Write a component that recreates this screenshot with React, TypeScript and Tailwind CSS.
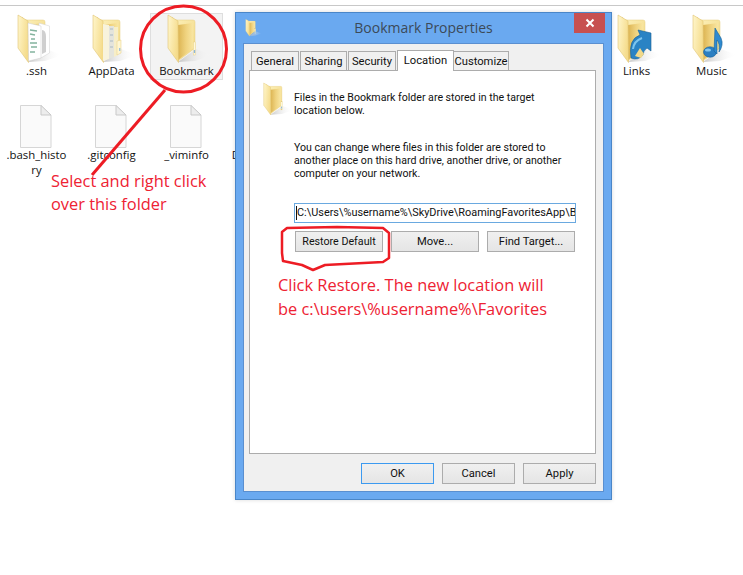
import React from "react";

const DIALOG = "font-['Roboto',sans-serif] text-[11.2px]";

function FolderBase({ children, w = 48, h = 49 }: { children?: React.ReactNode; w?: number; h?: number }) {
  return (
    <svg width={w} height={h} viewBox="-2 0 48 49" className="overflow-visible">
      <defs>
        <linearGradient id="fb" x1="0" y1="0" x2="1" y2="1">
          <stop offset="0" stopColor="#fdf2bd" />
          <stop offset="1" stopColor="#f1d680" />
        </linearGradient>
        <linearGradient id="ff" x1="0" y1="0" x2="1" y2="0.4">
          <stop offset="0" stopColor="#fff6cc" />
          <stop offset="1" stopColor="#f5dc8c" />
        </linearGradient>
        <linearGradient id="fs" x1="0" y1="0" x2="1" y2="0">
          <stop offset="0" stopColor="#dcb452" />
          <stop offset="0.5" stopColor="#efd27e" />
          <stop offset="1" stopColor="#f9e7a4" />
        </linearGradient>
        <linearGradient id="sh" x1="0" y1="0" x2="1" y2="0">
          <stop offset="0" stopColor="#b5b5b5" stopOpacity="0.75" />
          <stop offset="1" stopColor="#ffffff" stopOpacity="0" />
        </linearGradient>
      </defs>
      <path d="M13 47 L31 34 L47 40 L30 46Z" fill="url(#sh)" />
      <path d="M7 2 L10 5 L28 5 Q30 5 30 7 L30 33 L13 46Z" fill="url(#fb)" stroke="#e6cd82" strokeWidth="0.5" />
      <path d="M13 10 L28 8 L28.5 33 L13 45Z" fill="url(#fs)" />
      <path d="M3 0 L13 6 L13.5 47.5 L3 33Z" fill="url(#ff)" stroke="#e0c574" strokeWidth="0.6" />
      {children}
    </svg>
  );
}

function FolderSsh() {
  return (
    <FolderBase>
      <path d="M34.5 11 L24 8 L24 44 L34.5 38Z" fill="#fff" stroke="#d0d0d0" strokeWidth="0.5" />
      <path d="M13 8 L26 11 L26 43 L13.5 46Z" fill="#fff" stroke="#cfcfcf" strokeWidth="0.5" />
      <path d="M27 15 Q31 15 31 22 L31 37 L27 39Z" fill="#cfcfcf" />
      <path d="M15 15 L22 16 M15 19 L20 20 M16 24 L20 24 M15 28 L22 28 M16 32 L22 32 M15 37 L20 37" stroke="#84b49e" strokeWidth="1.5" />
    </FolderBase>
  );
}
function FolderApp() {
  return (
    <FolderBase>
      <path d="M13 9 L19 10 L19 44 L13 46Z" fill="#f8f3dc" />
      <path d="M19 11 L24 11 L24 42 L19 44Z" fill="#e4e4dc" />
      <path d="M20 14 L23 14 M20 20 L23 20 M20 26 L23 26 M20 32 L23 32" stroke="#bcc6cc" strokeWidth="1.5" />
      <path d="M24 12 L28 12 L28 40 L24 42Z" fill="#f7eec8" />
      <path d="M27 26 L31 25 L31 38 L27 40Z" fill="#fff6d2" stroke="#e6cd82" strokeWidth="0.5" />
      <rect x="29" y="33" width="1.4" height="3" fill="#9fc2dc" />
    </FolderBase>
  );
}
function FolderPlain({ w, h }: { w?: number; h?: number }) {
  return (
    <FolderBase w={w} h={h}>
      <rect x="28.5" y="27" width="2" height="13" fill="#fff8d8" stroke="#e6cd82" strokeWidth="0.4" />
      <rect x="28.8" y="35" width="1.4" height="3" fill="#8fb7d6" />
    </FolderBase>
  );
}
function FolderLinks() {
  return (
    <FolderBase>
      <path d="M16 43 Q13 24 25 20 L23 15 L36 18 L36 36 L32 33 Q28 36 28 40 Q23 46 16 43Z" fill="#2a83c4" stroke="#176095" strokeWidth="0.6" />
      <path d="M18 34 Q19 26 27 23" stroke="#7cc4ee" strokeWidth="2" fill="none" />
      <path d="M20 41 L25 33 L29 39 L26 43Z" fill="#f2d98a" />
    </FolderBase>
  );
}
function FolderMusic() {
  return (
    <FolderBase>
      <ellipse cx="20" cy="37" rx="6.5" ry="5.2" fill="#2b7fc2" stroke="#185f96" strokeWidth="0.6" />
      <path d="M24 36 L25 13 Q28 18 31 23 Q34 30 29 37 Q30 28 27 25 L27 39Z" fill="#2f8ad0" stroke="#185f96" strokeWidth="0.6" />
      <ellipse cx="18" cy="35" rx="3" ry="1.6" fill="#83c7f0" />
    </FolderBase>
  );
}
function FileIcon() {
  return (
    <svg width="33" height="43" viewBox="0 0 33 43" className="mt-[6px] mr-[2px]">
      <path d="M1.5 0.5 L22 0.5 L32 10 L32 42.5 L1.5 42.5Z" fill="#fafafa" stroke="#d6d6d6" />
      <path d="M22 0.5 L22 10 L32 10Z" fill="#ededed" stroke="#c9c9c9" />
    </svg>
  );
}

function DeskItem({ icon, label, selected }: { icon?: React.ReactNode; label?: React.ReactNode; selected?: boolean }) {
  return (
    <div
      className={`flex flex-col items-center pt-[1px] h-[67px] mr-[2px] border ${
        selected ? "bg-[#f3f3f3] border-[#dedede]" : "border-transparent"
      }`}
    >
      <div className="h-[48px] flex items-center justify-center">{icon}</div>
      <div className="text-[11.4px] leading-[15px] text-[#111] text-center whitespace-nowrap">{label}</div>
    </div>
  );
}

function Win8Button({ label, focus, wide, size }: { label: string; focus?: boolean; wide?: boolean; size?: string }) {
  return (
    <div
      className={`flex items-center justify-center whitespace-nowrap pt-[1px] text-[#111] border bg-gradient-to-b from-[#f0f0f0] to-[#e5e5e5] ${
        focus ? "border-[#3c9af0]" : "border-[#acacac]"
      } ${wide ? "w-[88px] h-[21px]" : "w-[73px] h-[21px]"} ${size ?? ""}`}
    >
      {label}
    </div>
  );
}

function Tab({ label, active, w }: { label: string; active?: boolean; w: string }) {
  return active ? (
    <div className={`${w} h-[21px] bg-white border border-b-0 border-[#acacac] text-[#111] flex items-center justify-center relative z-10 mb-[-1px]`}>
      {label}
    </div>
  ) : (
    <div className={`${w} h-[19px] bg-[#f0f0f0] border border-b-0 border-[#acacac] text-[#111] flex items-center justify-center pt-[2px]`}>
      {label}
    </div>
  );
}

export default function App() {
  return (
    <div className="relative w-[743px] h-[575px] bg-white overflow-hidden font-['Open_Sans',sans-serif]">
      <div className="h-[6px] border-b border-[#c8c8c8]" />
      {/* Explorer icon grid */}
      <div className="grid grid-cols-[repeat(10,75px)] pt-[7px] gap-y-[17px]">
        <DeskItem icon={<FolderSsh />} label=".ssh" />
        <DeskItem icon={<FolderApp />} label="AppData" />
        <DeskItem icon={<FolderPlain />} label="Bookmark" selected />
        <div /><div /><div /><div /><div />
        <DeskItem icon={<FolderLinks />} label="Links" />
        <DeskItem icon={<FolderMusic />} label="Music" />
        <DeskItem icon={<FileIcon />} label={<>.bash_histo<br />ry</>} />
        <DeskItem icon={<FileIcon />} label=".gitconfig" />
        <DeskItem icon={<FileIcon />} label="_viminfo" />
        <DeskItem label="Desktop.ini" />
      </div>

      {/* Dialog window */}
      <div className={`absolute left-[235px] top-[12px] w-[377px] h-[488px] bg-[#6aa9f0] border border-[#4a86c8] flex flex-col px-[7px] pb-[7px] shadow-[0_0_4px_rgba(0,0,0,0.15)] ${DIALOG}`}>
        <div className="relative h-[30px] shrink-0 flex items-center justify-center pb-[2px] text-[14px] text-[#3c4a58] font-['Open_Sans',sans-serif]">
          <span className="absolute left-[1px] top-[6px]"><FolderPlain w={17} h={18} /></span>
          Bookmark Properties
          <span className="absolute right-[-1px] top-0 w-[31px] h-[20px] bg-[#c75050] flex items-center justify-center">
            <svg width="10" height="10" viewBox="0 0 10 10">
              <path d="M1.5 1.5 L8.5 8.5 M8.5 1.5 L1.5 8.5" stroke="#fff" strokeWidth="2" />
            </svg>
          </span>
        </div>
        <div className="flex-1 bg-[#f0f0f0] border border-[#5a8fd0] flex flex-col pl-[5px] pr-[7px] pt-[5px]">
          <div className="flex items-end pl-[2px] h-[21px] shrink-0 gap-[1px]">
            <Tab label="General" w="w-[48px]" />
            <Tab label="Sharing" w="w-[47px]" />
            <Tab label="Security" w="w-[48px]" />
            <Tab label="Location" active w="w-[57px]" />
            <Tab label="Customize" w="w-[56px] ml-[-2px]" />
          </div>
          <div className="h-[384px] bg-white border border-[#acacac] pl-[13px] pt-[12px] shrink-0">
            <div className="flex">
              <div className="w-[31px] shrink-0 ml-[-3px] mr-[3px]"><FolderPlain w={33} h={33} /></div>
              <p className="leading-[13px] text-[10.6px] text-[#111] pt-[8px] whitespace-nowrap">
                Files in the Bookmark folder are stored in the target<br />location below.
              </p>
            </div>
            <p className="leading-[13px] text-[10.6px] text-[#111] ml-[31px] mt-[24px] whitespace-nowrap">
              You can change where files in this folder are stored to<br />another place on this hard drive, another drive, or another<br />computer on your network.
            </p>
            <div className="ml-[31px] mt-[23px] w-[282px] h-[20px] border border-[#6aa9e0] bg-white leading-[18px] text-[10.9px] text-[#111] pl-[1px] flex items-center overflow-hidden whitespace-nowrap">
              <span className="w-[1px] h-[14px] bg-[#111] shrink-0" />
              C:\Users\%username%\SkyDrive\RoamingFavoritesApp\B
            </div>
            <div className="ml-[32px] mt-[8px] w-[280px] flex justify-between">
              <Win8Button wide label="Restore Default" size="text-[10.7px]" />
              <Win8Button wide label="Move..." />
              <Win8Button wide label="Find Target..." />
            </div>
          </div>
          <div className="flex justify-end gap-[8px] mt-[9px]">
            <Win8Button focus label="OK" />
            <Win8Button label="Cancel" />
            <Win8Button label="Apply" />
          </div>
        </div>
      </div>

      {/* Hand-drawn annotations */}
      <svg className="absolute left-0 top-0 pointer-events-none" width="743" height="575" viewBox="0 0 743 575">
        <ellipse cx="183.5" cy="49" rx="43" ry="43" fill="none" stroke="#ed1c24" strokeWidth="3" />
        <path d="M165 90 L92 175" stroke="#ed1c24" strokeWidth="3" fill="none" />
        <path d="M282 232 L287 228 L337 227 L383 228 L389 233 L389 258 L383 262 L325 265 L313 270 L302 265 L283 261 L282 253Z" stroke="#ed1c24" strokeWidth="2.5" strokeLinejoin="round" fill="none" />
      </svg>
      <div className="absolute left-[51px] top-[169px] text-[16.4px] leading-[23px] text-[#ee2233]">
        Select and right click<br />over this folder
      </div>
      <div className="absolute left-[278px] top-[273px] text-[16.4px] leading-[24px] text-[#ee2233]">
        Click Restore. The new location will<br />be c:\users\%username%\Favorites
      </div>
    </div>
  );
}
